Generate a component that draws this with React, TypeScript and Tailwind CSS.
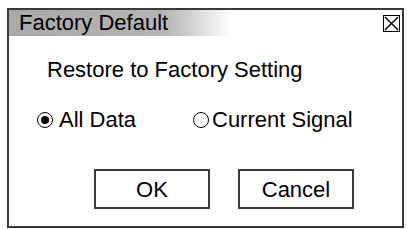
export default function App() {
  return (
    <div className="w-[407px] h-[229px] bg-white pt-[8px] pl-[7px]" style={{ fontFamily: '"Liberation Sans", Arial, sans-serif' }}>
      <div className="w-[397px] h-[220px] border-2 border-[#3a3a3a] flex flex-col">
        <div className="h-[26px] flex items-center justify-between">
          <div className="h-full w-[222px] bg-gradient-to-r from-[#a9a9a9] via-[#b4b4b4] via-70% to-white flex items-center pl-[10px]">
            <span className="text-[22px] leading-none text-black">Factory Default</span>
          </div>
          <div className="mr-[2px] w-[17px] h-[17px] border-[1.5px] border-black relative">
            <svg viewBox="0 0 16 16" className="absolute inset-0 w-full h-full">
              <path d="M1 1 L15 15 M15 1 L1 15" stroke="black" strokeWidth="1.5" />
            </svg>
          </div>
        </div>
        <div className="pl-[38px] pt-[23px] text-[22px] leading-none text-black">Restore to Factory Setting</div>
        <div className="flex items-center pt-[28px] text-[22px] leading-none text-black">
          <div className="flex items-center pl-[28px] w-[184px]">
            <span className="w-[16px] h-[16px] rounded-full border-[1.5px] border-black flex items-center justify-center mr-[6px]">
              <span className="w-[8px] h-[8px] rounded-full bg-black" />
            </span>
            All Data
          </div>
          <div className="flex items-center">
            <span className="w-[16px] h-[16px] rounded-full border-[1.5px] border-black mr-[3px]" />
            Current Signal
          </div>
        </div>
        <div className="flex pt-[38px] pl-[85px] gap-[28px]">
          <div className="w-[116px] h-[40px] border-2 border-[#3a3a3a] flex items-center justify-center text-[22px] text-black">OK</div>
          <div className="w-[116px] h-[40px] border-2 border-[#3a3a3a] flex items-center justify-center text-[22px] text-black">Cancel</div>
        </div>
      </div>
    </div>
  );
}
